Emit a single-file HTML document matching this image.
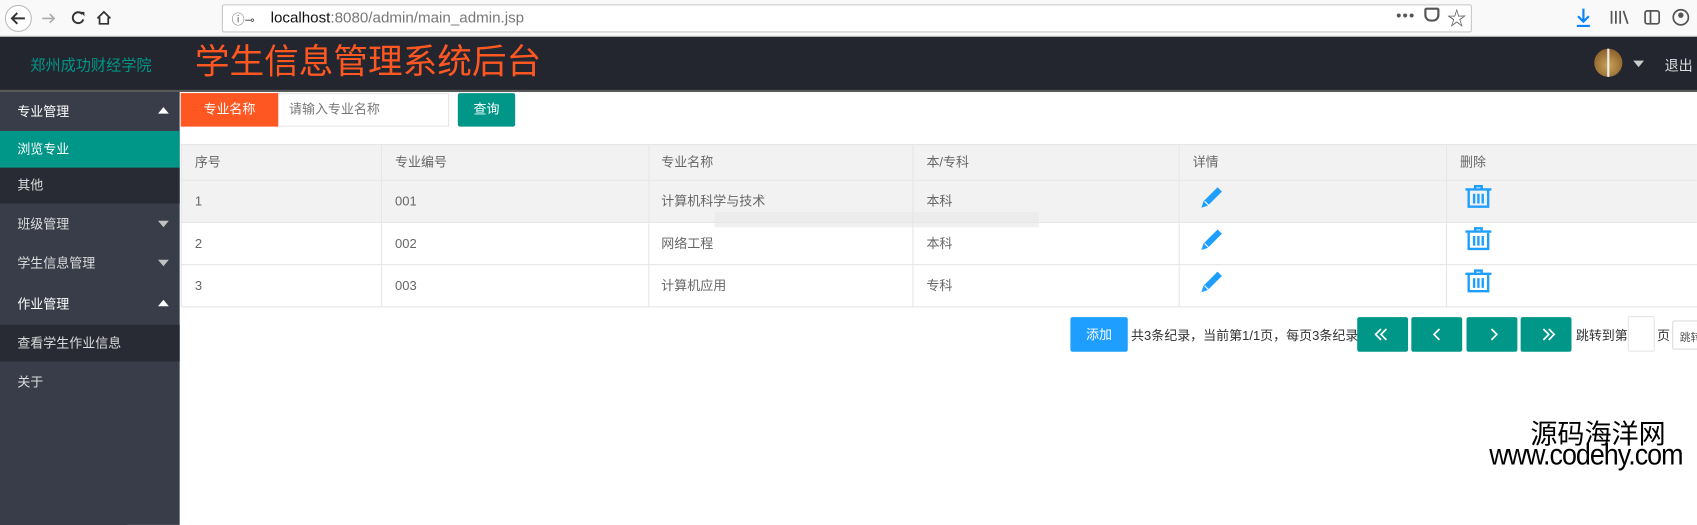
<!DOCTYPE html>
<html><head><meta charset="utf-8"><style>
*{margin:0;padding:0;box-sizing:border-box}
html,body{width:1697px;height:440px;overflow:hidden;background:#fff}
#w{position:absolute;left:0;top:0;width:1568px;height:407px;transform:scale(1.0823);transform-origin:0 0;font-family:"Liberation Sans","Noto Sans CJK SC",sans-serif;font-size:12px;color:#666}
.a{position:absolute}
.c{position:absolute;line-height:16px;height:16px}
.tb{left:0;top:0;width:1568px;height:34px;background:#f9f9fa;border-bottom:1px solid #ccc}
.url{left:205px;top:4px;width:1155px;height:26px;background:#fff;border:1px solid #c8c8c8;border-radius:2px}
.hd{left:0;top:34px;width:1568px;height:51px;background:#23262e;border-bottom:2px solid #5a5a5a}
.sb{left:0;top:85px;width:166px;height:400px;background:#393d49}
.si{position:absolute;left:0;width:166px;color:#fff;font-size:12px;padding-left:16px}
.ar{position:absolute;right:10px;width:0;height:0;border-left:5px solid transparent;border-right:5px solid transparent}
.up{border-bottom:6px solid #fff;top:14px}
.dn{border-top:6px solid #c2c2c2;top:15px}
.vl{position:absolute;width:1px;background:#e6e6e6}
.hl{position:absolute;height:1px;background:#e6e6e6;left:167px;width:1401px}
.pg{position:absolute;top:293px;width:47px;height:32px;background:#009688;border-radius:2px}
</style></head><body><div id="w">
<div class="a tb"></div>
<svg class="a" style="left:4px;top:4px" width="160" height="26" viewBox="0 0 160 26">
<circle cx="13" cy="13" r="12" fill="#fff" stroke="#bbb"/>
<path d="M19 13H8M12 8l-5 5 5 5" stroke="#333" stroke-width="1.8" fill="none"/>
<path d="M46 13h-11M42 9l4 4-4 4" stroke="#aaa" stroke-width="1.5" fill="none"/>
<path d="M72 9a5 5 0 1 0 1 5" stroke="#333" stroke-width="1.8" fill="none"/><path d="M70 7h4v4" fill="#333"/>
<path d="M86 13l6-6 6 6M88 12v6h8v-6" stroke="#333" stroke-width="1.6" fill="none"/>
</svg>
<div class="a url"></div>
<div class="a" style="left:214px;top:9px;font-size:12px;color:#555">ⓘ<span style="font-size:11px">⊸</span></div>
<div class="a" style="left:250px;top:8px;font-size:14px;color:#777"><span style="color:#111">localhost</span>:8080/admin/main_admin.jsp</div>
<div class="a" style="left:1290px;top:6px;font-size:14px;color:#555;letter-spacing:1px">•••</div>
<div class="a" style="left:1316px;top:7px;width:14px;height:13px;border:2px solid #555;border-radius:2px 2px 6px 6px"></div>
<div class="a" style="left:1337px;top:3px;font-size:18px;color:#555">☆</div>
<svg class="a" style="left:1455px;top:6px" width="120" height="22"><path d="M8 2v12M3 9l5 5 5-5M2 18h12" stroke="#0a84ff" stroke-width="2" fill="none"/><path d="M34 4v12M38 4v12M42 4v12M45 4l4 12" stroke="#555" stroke-width="1.6"/><rect x="65" y="4" width="13" height="12" rx="2" fill="none" stroke="#555" stroke-width="1.6"/><path d="M70 4v12" stroke="#555" stroke-width="1.6"/><circle cx="98" cy="10" r="7" fill="none" stroke="#555" stroke-width="1.6"/><circle cx="98" cy="8" r="2.5" fill="#555"/></svg>

<div class="a hd"></div>
<div class="a" style="left:28px;top:50px;font-size:14px;color:#009688">郑州成功财经学院</div>
<div class="a" style="left:180px;top:36px;font-size:32px;color:#ff5722;line-height:42px">学生信息管理系统后台</div>
<div class="a" style="left:1473px;top:45px;width:26px;height:26px;border-radius:50%;background:radial-gradient(circle at 50% 60%,#c9a55a,#7a4a1c)"></div>
<div class="a" style="left:1485px;top:45px;width:2px;height:26px;background:#eee"></div>
<div class="a" style="left:1509px;top:56px;border-left:5px solid transparent;border-right:5px solid transparent;border-top:6px solid #ccc"></div>
<div class="a" style="left:1538px;top:50px;font-size:13px;color:#ddd">退出</div>

<div class="a sb"></div>
<div class="si" style="top:85px;height:36px;line-height:36px;">专业管理<i class="ar up"></i></div>
<div class="si" style="top:121px;height:34px;line-height:34px;background:#009688">浏览专业</div>
<div class="si" style="top:155px;height:33px;line-height:33px;background:#282b33;color:#ddd">其他</div>
<div class="si" style="top:189px;height:36px;line-height:36px;color:#ddd">班级管理<i class="ar dn"></i></div>
<div class="si" style="top:225px;height:36px;line-height:36px;color:#ddd">学生信息管理<i class="ar dn"></i></div>
<div class="si" style="top:263px;height:36px;line-height:36px;">作业管理<i class="ar up"></i></div>
<div class="si" style="top:300px;height:34px;line-height:34px;background:#282b33;color:#ddd">查看学生作业信息</div>
<div class="si" style="top:335px;height:36px;line-height:36px;color:#ddd">关于</div>

<div class="a" style="left:167px;top:86px;width:90px;height:31px;background:#ff5722;color:#fff;line-height:31px;text-align:center">专业名称</div>
<div class="a" style="left:257px;top:86px;width:158px;height:31px;border:1px solid #e6e6e6;line-height:29px;padding-left:9px;color:#777">请输入专业名称</div>
<div class="a" style="left:423px;top:86px;width:53px;height:31px;background:#009688;border-radius:2px;color:#fff;line-height:31px;text-align:center">查询</div>

<div class="a" style="left:167px;top:133px;width:1401px;height:33px;background:#f2f2f2"></div>
<div class="a" style="left:167px;top:166px;width:1401px;height:39px;background:#f2f2f2"></div>
<div class="a" style="left:660px;top:196px;width:300px;height:14px;background:#e9e9e9;opacity:.7"></div>
<div class="hl" style="top:133px"></div><div class="hl" style="top:166px"></div><div class="hl" style="top:205px"></div><div class="hl" style="top:244px"></div><div class="hl" style="top:283px"></div>
<div class="vl" style="left:167px;top:133px;height:150px"></div>
<div class="vl" style="left:352px;top:133px;height:150px"></div>
<div class="vl" style="left:599px;top:133px;height:150px"></div>
<div class="vl" style="left:843px;top:133px;height:150px"></div>
<div class="vl" style="left:1089px;top:133px;height:150px"></div>
<div class="vl" style="left:1336px;top:133px;height:150px"></div>

<div class="c" style="left:180px;top:142px">序号</div><div class="c" style="left:365px;top:142px">专业编号</div><div class="c" style="left:611px;top:142px">专业名称</div><div class="c" style="left:856px;top:142px">本/专科</div><div class="c" style="left:1102px;top:142px">详情</div><div class="c" style="left:1349px;top:142px">删除</div>
<div class="c" style="left:180px;top:178px">1</div><div class="c" style="left:365px;top:178px">001</div><div class="c" style="left:611px;top:178px">计算机科学与技术</div><div class="c" style="left:856px;top:178px">本科</div>
<div class="c" style="left:180px;top:217px">2</div><div class="c" style="left:365px;top:217px">002</div><div class="c" style="left:611px;top:217px">网络工程</div><div class="c" style="left:856px;top:217px">本科</div>
<div class="c" style="left:180px;top:256px">3</div><div class="c" style="left:365px;top:256px">003</div><div class="c" style="left:611px;top:256px">计算机应用</div><div class="c" style="left:856px;top:256px">专科</div>

<svg class="a" style="left:1107px;top:170px" width="26" height="110">
<g id="p"><path d="M3 22l2-6 13-13 4 4-13 13z" fill="#1e9fff"/><path d="M6 16l4 4" stroke="#fff" stroke-width="1"/></g>
<use href="#p" y="39"/><use href="#p" y="78"/></svg>
<svg class="a" style="left:1352px;top:170px" width="30" height="110">
<g id="t" fill="none" stroke="#1e9fff" stroke-width="2.2"><path d="M2 5h24M11 5V2h6v3"/><path d="M5 6v15h18V6"/><path d="M10 9v9M14 9v9M18 9v9"/></g>
<use href="#t" y="39"/><use href="#t" y="78"/></svg>

<div class="a" style="left:989px;top:293px;width:53px;height:32px;background:#1e9fff;border-radius:2px;color:#fff;line-height:32px;text-align:center">添加</div>
<div class="a" style="left:1045px;top:301px;color:#333;font-size:12px;white-space:nowrap">共3条纪录，当前第1/1页，每页3条纪录</div>
<div class="pg" style="left:1254px"></div><div class="pg" style="left:1304px"></div><div class="pg" style="left:1355px"></div><div class="pg" style="left:1405px"></div>
<svg class="a" style="left:1254px;top:293px" width="200" height="32" fill="none" stroke="#fff" stroke-width="1.6">
<path d="M22 11l-5 5 5 5M27 11l-5 5 5 5"/><path d="M76 11l-5 5 5 5"/><path d="M124 11l5 5-5 5"/><path d="M172 11l5 5-5 5M177 11l5 5-5 5"/></svg>
<div class="a" style="left:1456px;top:301px;color:#333">跳转到第</div>
<div class="a" style="left:1504px;top:292px;width:25px;height:33px;border:1px solid #e6e6e6;border-radius:2px"></div>
<div class="a" style="left:1531px;top:301px;color:#333">页</div>
<div class="a" style="left:1545px;top:296px;width:40px;height:27px;border:1px solid #ddd;border-radius:2px;padding:6px 0 0 6px;font-size:10px;color:#555">跳转</div>

<div class="a" style="left:1414px;top:382px;font-size:25px;color:#000">源码海洋网</div>
<div class="a" style="left:1376px;top:405px;font-size:27px;color:#000;letter-spacing:-1px;transform:scaleX(.92);transform-origin:left">www.codehy.com</div>
</div></body></html>
